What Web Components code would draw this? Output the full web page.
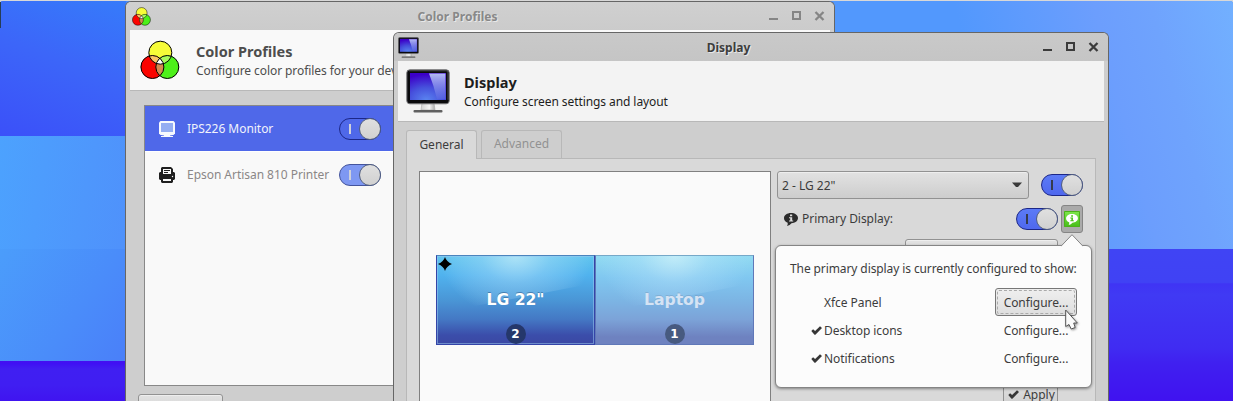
<!DOCTYPE html>
<html lang="en"><head><meta charset="utf-8"><title>Display settings</title>
<style>
body{margin:0;background:#fff;font:12px "Noto Sans",sans-serif;color:#3c3c3c}
</style></head><body>
<xf-desktop></xf-desktop>
<script>
const def=(name,html)=>customElements.define(name,class extends HTMLElement{
  connectedCallback(){ if(this.shadowRoot) return;
    const t=document.createElement('template'); t.innerHTML=html;
    this.attachShadow({mode:'open'}).append(t.content.cloneNode(true)); }
});

/* three overlapping colour circles */
def('xf-color-icon',`<style>:host{display:block;width:40px;height:40px}svg{display:block;width:100%;height:100%}</style>
<svg viewBox="0 0 40 40"><defs><clipPath id="y"><circle cx="20.3" cy="12.7" r="11.5"/></clipPath><clipPath id="r"><circle cx="12.4" cy="27" r="11.5"/></clipPath></defs>
<circle cx="20.3" cy="12.7" r="11.5" fill="#f7fc38"/><circle cx="12.4" cy="27" r="11.5" fill="#fb0400"/><circle cx="27.3" cy="27" r="11.5" fill="#4df01a"/>
<g clip-path="url(#y)"><circle cx="12.4" cy="27" r="11.5" fill="#fcc364"/><circle cx="27.3" cy="27" r="11.5" fill="#a8fb5c"/></g>
<g clip-path="url(#r)"><circle cx="27.3" cy="27" r="11.5" fill="#d58a50"/><g clip-path="url(#y)"><circle cx="27.3" cy="27" r="11.5" fill="#fff"/></g></g>
<g fill="none" stroke="#000" stroke-width="1"><circle cx="20.3" cy="12.7" r="11.5"/><circle cx="12.4" cy="27" r="11.5"/><circle cx="27.3" cy="27" r="11.5"/></g></svg>`);

/* glossy monitor */
def('xf-monitor-icon',`<style>:host{display:block;width:44px;height:44px}svg{display:block;width:100%;height:100%}</style>
<svg viewBox="0 0 44 44"><defs><radialGradient id="s" cx=".45" cy="1" r=".95"><stop offset="0" stop-color="#5a84f0"/><stop offset=".5" stop-color="#4650dc"/><stop offset="1" stop-color="#3c00c8"/></radialGradient>
<linearGradient id="g" x2="0" y2="1"><stop offset="0" stop-color="#b4bcf4"/><stop offset="1" stop-color="#5c6ae4" stop-opacity=".6"/></linearGradient>
<linearGradient id="f" x2="1"><stop offset="0" stop-color="#d0d0d0"/><stop offset=".6" stop-color="#f4f4f4"/><stop offset="1" stop-color="#aaa"/></linearGradient></defs>
<path d="M16 34h12l1 7H15z" fill="url(#f)" stroke="#b0b0b0" stroke-width=".7"/><rect x="7.500" y="41" width="29" height="2.600" rx="1" fill="#606060"/>
<rect x=".8" y=".8" width="42.4" height="34" rx="3" fill="#0a0a0c" stroke="#77777a" stroke-width="1"/><path d="M3 1.8h38l1 2v27" stroke="#4c4c50" fill="none"/>
<rect x="4" y="4" width="36" height="27" fill="url(#s)"/><path d="M23 4.5h16.5V30H31Q28 17 23 4.5z" fill="url(#g)"/></svg>`);

def('xf-info-icon',`<style>:host{display:block;width:14px;height:13px}svg{display:block;width:100%;height:100%}</style>
<svg viewBox="0 0 14 13"><path d="M7 0C11 0 14 2.1 14 5s-3 5.200-6.500 5.200Q6 12.500 3 13q1-1.500.700-3.300C1.500 8.800 0 7.200 0 5.200 0 2.200 3 0 7 0z" fill="currentColor"/><path d="M6 1.600h2.200v1.700H6zM5 4.200h3.200v3.300H9.200v1H5v-1h1.200V5.200H5z" fill="var(--mark,#dcdcdc)"/></svg>`);

def('xf-check',`<style>:host{display:block;width:11px;height:9px}svg{display:block}</style><svg width="11" height="9" viewBox="0 0 11 9"><path d="M.3 5 2.100 3.200 4.100 5 9 .200 11 1.900 4.400 8.800H3.500z" fill="#363636"/></svg>`);

def('xf-switch',`<style>
:host{display:block;box-sizing:border-box;width:42px;height:22px;border:1px solid #1c2788;border-radius:11px;background:linear-gradient(#5c7bf6,#4f68ee);position:relative;flex:none;--bar:#353b4c}
:host([selected]){background:#4f68e9;--bar:#cfd1da}
:host([dim]){background:#7e98f2;border-color:#44549c;--bar:#ced1da}
i{display:block;width:2px;height:10px;margin:5px 0 0 9px;background:var(--bar)}
b{position:absolute;right:-1px;top:-1px;width:20px;height:20px;border:1px solid #53607f;border-radius:50%;background:linear-gradient(#e0e0e0,#d0d0d0)}
</style><i></i><b></b>`);

def('xf-button',`<style>
:host{display:flex;box-sizing:border-box;align-items:center;justify-content:center;border:1px solid #929292;border-radius:3px;background:linear-gradient(#e2e2e2,#cdcdcd);box-shadow:inset 0 1px #eee}
:host([flat]){border-color:transparent;background:none;box-shadow:none}
:host([pressed]){background:#aaa;border-color:#858585;box-shadow:none}
:host([focus]){background:linear-gradient(#efefef,#dedede);border-color:#777;position:relative}
:host([focus])::after{content:"";position:absolute;inset:1px;border:1px dashed #aaa;border-radius:2px}
</style><slot></slot>`);

def('xf-window',`<style>
:host{display:flex;flex-direction:column;box-sizing:border-box;position:absolute;border:1px solid #666;border-bottom:0;border-radius:6px 6px 0 0;background:#cecece;padding:0 4px}
.bar{display:flex;align-items:center;height:28px;background:linear-gradient(#c9c9c9,#c5c5c5);margin:0 -4px;padding:0 9px 0 4px;border-radius:5px 5px 0 0;flex:none}
:host([inactive]) .bar{background:linear-gradient(#d0d0d0,#cbcbcb)}
.t{flex:1;text-align:center;font-weight:700;font-size:12px;color:#3d3d3d;text-shadow:1px 1px #e8e8e8;padding-right:5px}
:host([inactive]) .t{color:#888}
.c{display:block;color:#3b3b3b}:host([inactive]) .c{color:#858585}
.head{display:flex;align-items:center;height:60px;border-bottom:1px solid #b8b8b8;background:#f3f3f3;flex:none;padding:0 10px;gap:var(--gap,14px)}
:host([inactive]) .head{background:#f9f9f9}
h1{font-size:14.500px;line-height:20px;margin:-2px 0 1px;color:#1d1d1d;position:relative}p{margin:0;line-height:17px;color:#1d1d1d;letter-spacing:-.08px}
:host([inactive]) :is(h1,p){color:#4d4d4d}
.words{padding-top:2px;white-space:nowrap}
</style><div class="bar"><slot name="icon"></slot><div class="t"><slot name="title"></slot></div>
<svg class="c" width="56" height="10" viewBox="0 0 56 10"><path d="M0 7h9v2H0z" fill="currentColor"/><path d="M24 1h7v7h-7z" fill="none" stroke="currentColor" stroke-width="2"/><path d="m46.500 1 8 8m0-8-8 8" stroke="currentColor" stroke-width="2.300"/></svg></div>
<div class="head"><slot name="big"></slot><div class="words"><h1><slot name="title2"></slot></h1><p><slot name="sub"></slot></p></div></div><slot></slot>`);

def('xf-device',`<style>:host{display:flex;align-items:center;height:45px;padding:0 0 0 14px;color:#8b8787;border-top:1px solid #fff}
:host([selected]){background:#4f68e9;color:#f1f3fb;border-top:0}
.l{width:142px;margin:0 10px 0 12px;white-space:nowrap;letter-spacing:-.04px}</style><slot name="icon"></slot><span class="l"><slot></slot></span><slot name="switch"></slot>`);

def('xf-screen',`<style>
:host{display:block;box-sizing:border-box;width:159px;height:90px;border:1px solid #3444a8;border-top-color:#4b84bd;background:linear-gradient(#60c5ee,#50b2ee 22%,#4a96d6 50%,#4478c4 72%,#3b4daa 90%,#3b48a4);position:relative;color:#fff}
:host([dim]){border-color:#6078b8;border-top-color:#76a8c8;background:linear-gradient(#92dbf2,#80c7f0 25%,#7cb5e4 50%,#7ca3d8 72%,#6e82c0 92%);color:#d5e3f4}
.shine{position:absolute;inset:0;background:radial-gradient(ellipse 76px 60px at 50% 0,rgba(225,248,252,.6),rgba(190,230,252,.34) 45%,rgba(170,220,250,.18) 80%,transparent);clip-path:polygon(0 0,100% 0,100% 31%,0 65%)}
:host(:not([dim])) .edge{position:absolute;inset:0;border:1px solid #9ac8ee88}
.name{position:relative;text-align:center;font:700 15.600px/20px "DejaVu Sans",sans-serif;margin-top:34px;text-shadow:0 -1px #34608f99}
.n{position:relative;width:20px;height:20px;border-radius:50%;background:#25376b;margin:14px auto 0;text-align:center;font:700 12px/20px "DejaVu Sans",sans-serif;color:#fff}
:host([dim]) .n{background:#475a80}
:host([dim]) .name{text-shadow:0 -1px #7090b066}
svg{position:absolute;left:1px;top:1px}
:host([dim]) svg{display:none}
</style><div class="shine"></div><div class="edge"></div><svg width="14" height="14" viewBox="0 0 14 14"><path d="M7 0Q8.300 4.700 14 7 8.300 9.300 7 14 5.700 9.300 0 7 5.700 4.700 7 0z"/></svg><div class="name"><slot></slot></div><div class="n"><slot name="n"></slot></div>`);

def('xf-popover',`<style>:host{display:block;box-sizing:border-box;position:absolute;border:1px solid #858585;border-radius:6px;background:#fcfcfc;box-shadow:0 1px 3px #0006;padding:14px 14px 0}
.tip{position:absolute;right:8px;top:-12px}
.lead{line-height:17px;white-space:nowrap;margin-bottom:11px;letter-spacing:-.1px}
.grid{display:grid;grid-template-columns:13px 1fr 82px;align-items:center;padding-left:21px;grid-template-rows:28px 28px 28px;letter-spacing:-.06px}
xf-button{height:28px}</style>
<svg class="tip" width="22" height="13" viewBox="0 0 22 13"><path d="M0 12.500 11 .7 22 12.500z" fill="#fcfcfc"/><path d="M0 11.700h.5L11 .7 21.500 11.700h.5" fill="none" stroke="#858585"/></svg>
<div class="lead">The primary display is currently configured to show:</div>
<div class="grid"><span></span><span>Xfce Panel</span><xf-button focus>Configure...</xf-button>
<xf-check></xf-check><span>Desktop icons</span><xf-button flat>Configure...</xf-button>
<xf-check></xf-check><span>Notifications</span><xf-button flat>Configure...</xf-button></div>`);

def('xf-tabs',`<style>:host{display:flex;flex-direction:column;flex:1;padding:8px 8px 0;min-height:0}
.tabs{display:flex;gap:4px;height:29px;margin-bottom:-1px;position:relative}
.tab{box-sizing:border-box;border:1px solid #b8b8b8;border-bottom:0;border-radius:3px 3px 0 0;height:28px;line-height:26px;text-align:center;width:81px;color:#929292}
.on{width:71px;height:29px;background:#d9d9d9;color:#3d3d3d;line-height:28px}
.body{flex:1;display:flex;gap:6px;border:1px solid #b8b8b8;border-bottom:0;background:#d9d9d9;padding:12px 12px 0}</style>
<div class="tabs"><div class="tab on">General</div><div class="tab">Advanced</div></div><div class="body"><slot></slot></div>`);

def('xf-color-window',`<style>:host{display:block}xf-window{left:125px;top:1px;width:710px;height:400px;--gap:16px}
.small{width:19px;height:19px;margin-left:2px}
.list{margin:14px 14px 0;border:1px solid #888;height:279px;background:#f9f9f9;flex:none}
.under{display:flex;padding:8px 8px 0}.under xf-button{width:85px;height:27px}</style>
<xf-window inactive><xf-color-icon slot="icon" class="small"></xf-color-icon><span slot="title">Color Profiles</span><xf-color-icon slot="big"></xf-color-icon><span slot="title2">Color Profiles</span><span slot="sub">Configure color profiles for your devices</span>
<div class="list"><xf-device selected><svg slot="icon" width="16" height="16"><path d="M1.500 0h13L16 1.500v11L14.500 14h-13L0 12.500v-11z" fill="#f6f8fd"/><path d="M2 2h12v9H2z" fill="#94adf2"/><path d="M5 13h6v1.500l3 .5v1H2v-1l3-.5z" fill="#f6f8fd"/></svg>IPS226 Monitor<xf-switch slot="switch" selected></xf-switch></xf-device>
<xf-device><svg slot="icon" width="16" height="16"><path d="M3 0h9l2 2v3h1l1 1v6l-1 1h-1v2l-1 1H3l-1-1v-2H1l-1-1V6l1-1h1V1z" fill="#202020"/><path d="M4 2h8v5H4zM4 12h8v2H4z" fill="#f9f9f9"/><path d="M5 3h6v1H5zm0 2h4v1H5z" fill="#202020"/><circle cx="13.500" cy="9.500" r=".7" fill="#f9f9f9"/></svg>Epson Artisan 810 Printer<xf-switch slot="switch" dim></xf-switch></xf-device></div>
<div class="under"><xf-button></xf-button></div></xf-window>`);

def('xf-display-window',`<style>:host{display:block}xf-window{left:393px;top:32px;width:716px;height:369px}
.small{width:21px;height:21px}
.canvas{width:350px;border:1px solid #808080;border-bottom:0;background:#fafafa;flex:none}
.screens{display:flex;margin:83px 0 0 16px}
.form{flex:1;display:flex;flex-direction:column;min-width:0}
.row{display:flex;align-items:center;height:28px}
.combo{width:252px;height:28px;justify-content:space-between;padding:0 6px 0 4px}
.row xf-switch{margin-left:auto}
.info{margin:0 4px 0 7px;color:#2c2c2c}
.lbl{padding-bottom:2px;letter-spacing:-.04px}
.row .tool{width:22px;height:28px;margin-left:3px}
.badge{width:16px;height:16px;display:flex;align-items:center;justify-content:center;background:linear-gradient(#7fe84c,#45bd17);border-radius:1px;box-shadow:inset 0 0 0 1px #4cb01c;color:#fff;flex:none}
.badge xf-info-icon{width:12px;height:11px;--mark:#4fc41f}
.hidden{width:153px;height:28px;margin:6px 25px 0 auto;flex:none}
.apply{width:55px;height:27px;margin:114px 25px 0 auto;gap:4px;flex:none;padding-left:2px}</style>
<xf-window><xf-monitor-icon slot="icon" class="small"></xf-monitor-icon><span slot="title">Display</span><xf-monitor-icon slot="big" style="margin-left:-2px"></xf-monitor-icon><span slot="title2">Display</span><span slot="sub">Configure screen settings and layout</span>
<xf-tabs><div class="canvas"><div class="screens"><xf-screen>LG 22"<span slot="n">2</span></xf-screen><xf-screen dim>Laptop<span slot="n">1</span></xf-screen></div></div>
<div class="form"><div class="row"><xf-button class="combo">2 - LG 22"<svg width="10" height="6"><path d="M0 .5h10L6 5H4z" fill="#3a3a3a"/></svg></xf-button><xf-switch></xf-switch></div>
<div class="row" style="margin-top:6px"><xf-info-icon class="info"></xf-info-icon><span class="lbl">Primary Display:</span><xf-switch></xf-switch><xf-button pressed class="tool"><span class="badge"><xf-info-icon></xf-info-icon></span></xf-button></div>
<xf-button class="hidden"></xf-button><xf-button class="apply"><xf-check></xf-check>Apply</xf-button></div></xf-tabs></xf-window>`);

def('xf-desktop',`<style>
:host{display:block;position:relative;width:1233px;height:401px;overflow:hidden;background:#d8d8d8}
.wall{position:absolute;inset:1px 0 0;border-radius:3px 3px 0 0;overflow:hidden;display:flex;justify-content:space-between;background:#4a8cf8}
.side{display:flex;flex-direction:column;height:400px;width:126px}
.side.right{width:400px}
.side div{flex:none}
.a{height:135px;background:linear-gradient(20deg,#3b50f9,#3c66f9 55%,#367bfa)}
.b{height:113px;background:linear-gradient(100deg,#4ca2fe,#4f91fb)}
.c{height:112px;background:linear-gradient(125deg,#4b9dfb,#4a8cfa 60%,#4a7ff9)}
.d{height:40px;background:linear-gradient(#4410f0,#4010f4 6%,#401ff2 20%,#401ef2 60%,#4014f0)}
.e{height:248px;background:linear-gradient(75deg,#5298fd 40%,#6c9efd 70%,#6fa3fd 82%,#72b0ff)}
.f{height:152px;background:linear-gradient(#4044f4,#4042f4 22%,#3f34f4 23%,#403af4 30%,#402cf2 65%,#4020f0 75%,#4012f0)}
.edge{position:absolute;left:0;top:2px;width:1px;height:26px;background:#263d56}
xf-popover{left:775px;top:245px;width:317px;height:143px}
.cursor{position:absolute;left:1065px;top:309px;filter:drop-shadow(1px 1px 1px #0006)}
</style><div class="wall"><div class="side"><div class="a"></div><div class="b"></div><div class="c"></div><div class="d"></div></div><div class="side right"><div class="e"></div><div class="f"></div></div></div><div class="edge"></div>
<xf-color-window></xf-color-window><xf-display-window></xf-display-window><xf-popover></xf-popover>
<svg class="cursor" width="14" height="23" viewBox="0 0 14 23"><path d="M.7 1v16.500L4 15.500 6.200 20l4-1.500-1.500-4.500H12.300z" fill="#fafafa" stroke="#555" stroke-width="1"/></svg>`);
</script></body></html>
